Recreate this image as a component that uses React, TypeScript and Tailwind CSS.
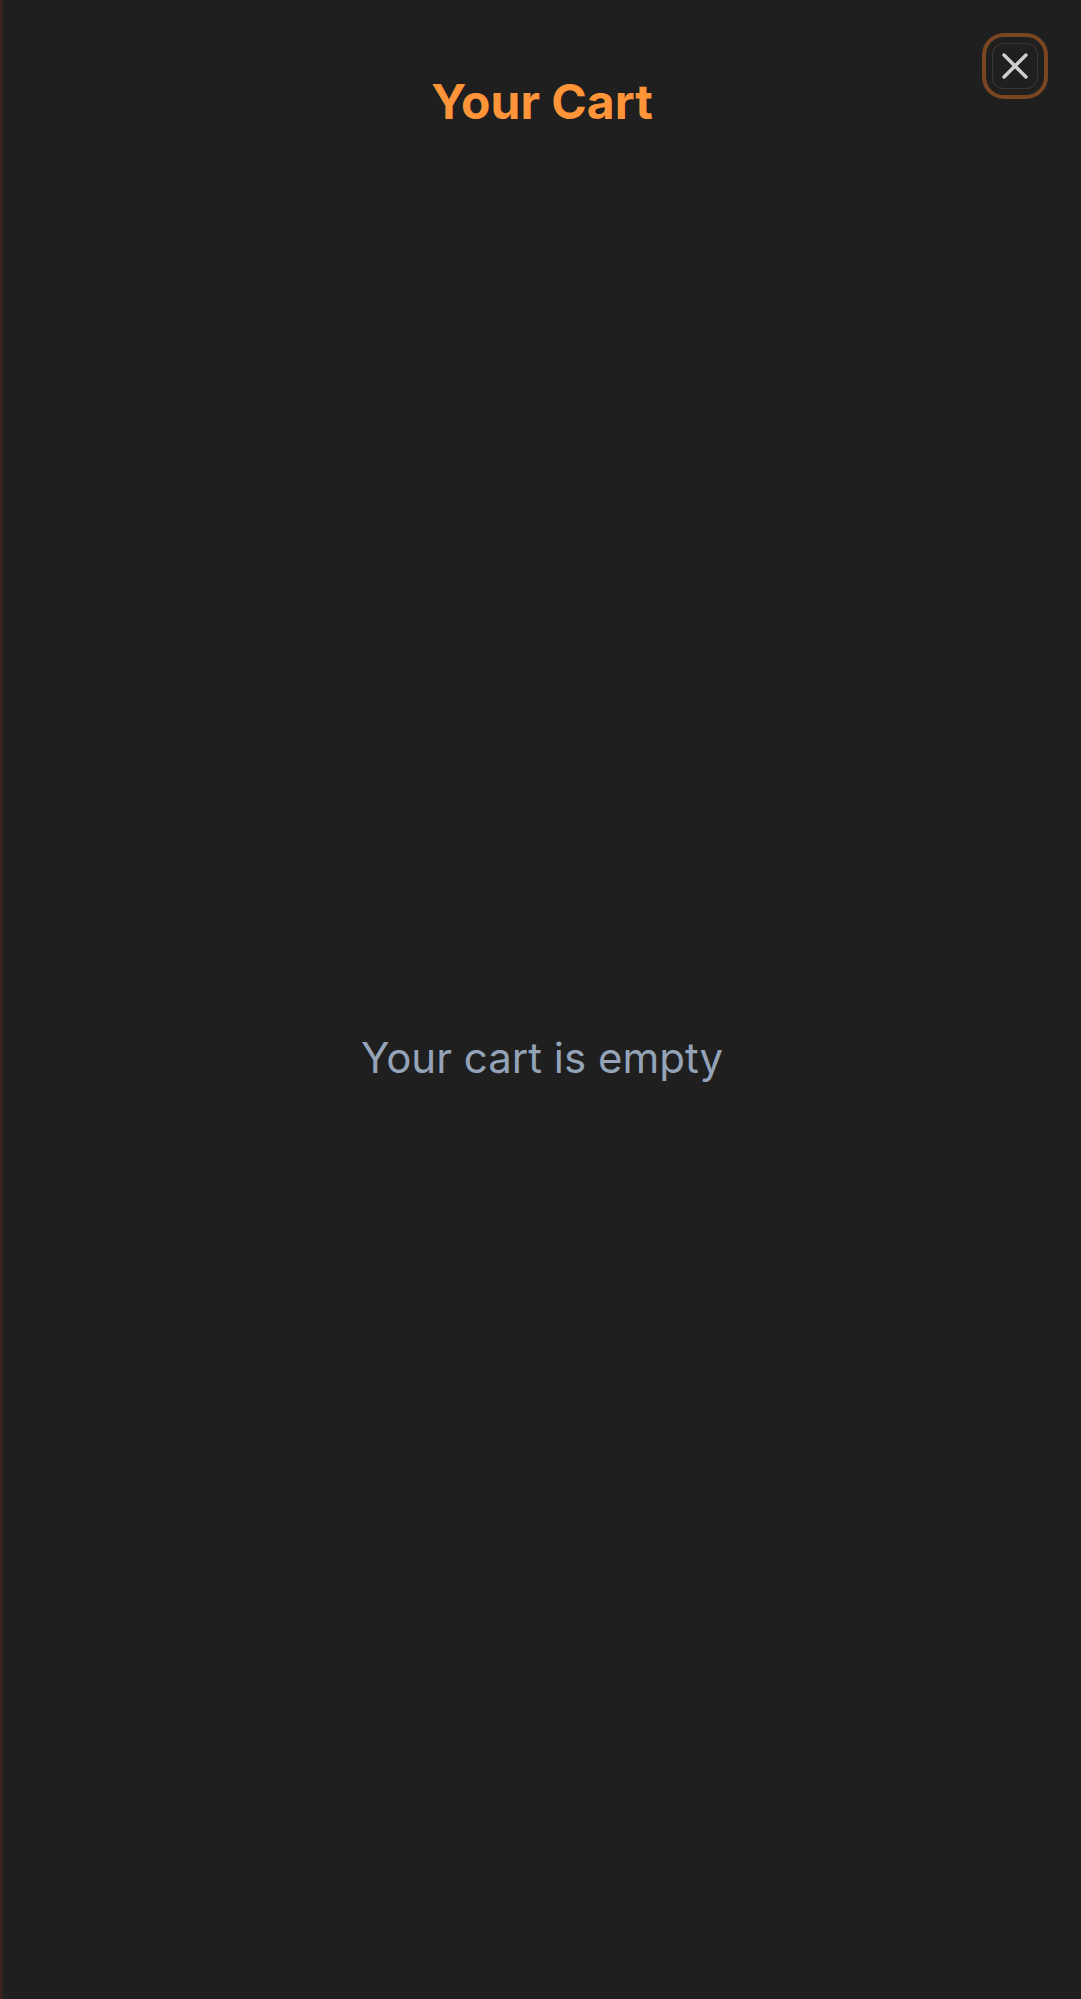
const App = () => {
  return (
    <div
      className="relative flex h-[1999px] w-full flex-col border-l-[3px] border-[#3a231b] bg-[#1f1f1f]"
      style={{ fontFamily: "Inter, 'Noto Sans', sans-serif" }}
    >
      <header className="flex justify-center pt-[78px]">
        <h1 className="text-[48px] font-bold leading-[48px] text-[#ff9538]">Your Cart</h1>
      </header>

      <button
        className="absolute right-[43px] top-[43px] flex h-[46px] w-[46px] items-center justify-center rounded-xl border border-white/10 text-[#cfcfcf] ring-4 ring-[#7a4622] ring-offset-[6px] ring-offset-[#1f1f1f]"
        aria-label="Close"
      >
        <svg width="26" height="26" viewBox="0 0 26 26" fill="none" stroke="currentColor" strokeWidth="3.4" strokeLinecap="round">
          <path d="M2 2 L24 24" />
          <path d="M24 2 L2 24" />
        </svg>
      </button>

      <main className="flex flex-1 items-center justify-center pb-[10px]">
        <p className="text-[42px] text-[#94a3b8]">Your cart is empty</p>
      </main>
    </div>
  );
};

export default App;
